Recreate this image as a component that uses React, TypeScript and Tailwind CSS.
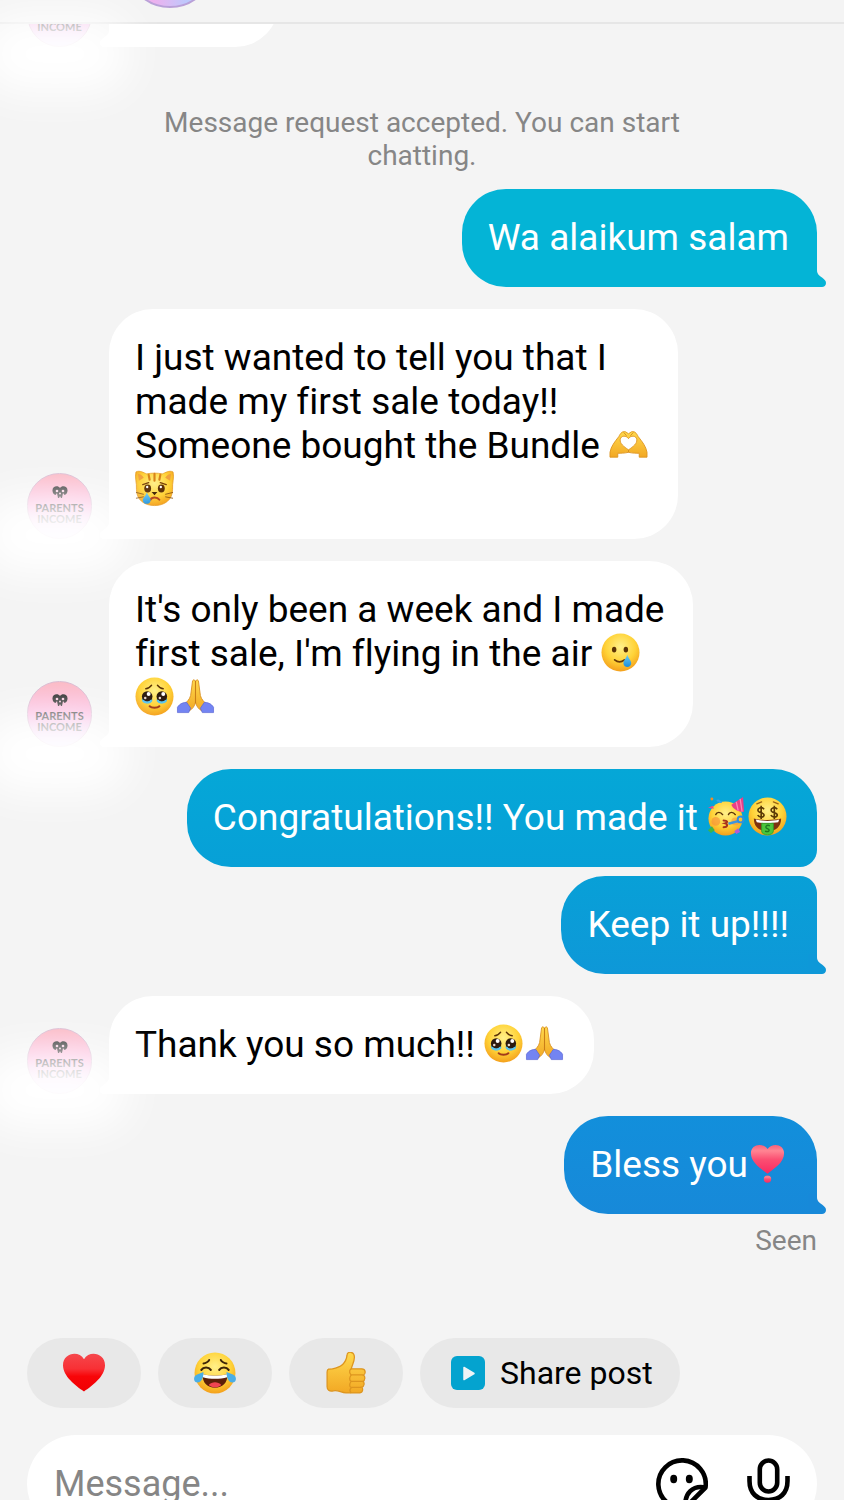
import { ReactNode, useState } from "react";
import clsx from "clsx";

const EMOJI = "inline-block w-[39px] h-[39px] mr-[2px] align-[-6px]";

// shared gradients, every emoji points at these
function EmojiDefs() {
    return (
        <svg className="absolute w-0 h-0" aria-hidden="true">
            <defs>
                <radialGradient id="face" cx="0.5" cy="0.35" r="0.65">
                    <stop offset="0" stopColor="#fff08a" />
                    <stop offset="0.6" stopColor="#ffd338" />
                    <stop offset="1" stopColor="#f4a01c" />
                </radialGradient>
                <linearGradient id="hand" x1="0" y1="0" x2="0" y2="1">
                    <stop offset="0" stopColor="#ffd94d" />
                    <stop offset="1" stopColor="#f2a824" />
                </linearGradient>
                <linearGradient id="heart" x1="0" y1="0" x2="0" y2="1">
                    <stop offset="0" stopColor="#f5474c" />
                    <stop offset="0.4" stopColor="#f83035" />
                    <stop offset="0.6" stopColor="#f80508" />
                    <stop offset="1" stopColor="#f00004" />
                </linearGradient>
                <linearGradient id="pinkHeart" x1="0" y1="0" x2="0" y2="1">
                    <stop offset="0" stopColor="#f9607a" />
                    <stop offset="0.2" stopColor="#ff8593" />
                    <stop offset="0.5" stopColor="#fb4f72" />
                    <stop offset="1" stopColor="#f92a62" />
                </linearGradient>
                <linearGradient id="tear" x1="0" y1="0" x2="0" y2="1">
                    <stop offset="0" stopColor="#6fcdf5" />
                    <stop offset="1" stopColor="#1b8fdc" />
                </linearGradient>
            </defs>
        </svg>
    );
}

function Emoji({ label, className, children }: { label: string; className?: string; children: ReactNode }) {
    return (
        <svg viewBox="0 0 40 40" role="img" aria-label={label} className={className ?? EMOJI}>
            {children}
        </svg>
    );
}

function HeartHands() {
    return (
        <Emoji label="heart hands">
            <path d="M1 33 L1 28 C2 22 6 17 10 12 C12 8 14 6 17 7 L20 9 L23 7 C26 6 28 8 30 12 C34 17 38 22 39 28 L39 33 L31 33 L31 29 C28 29 24 29 20 28 C16 29 12 29 9 29 L9 33 Z" fill="url(#hand)" stroke="#dd9420" strokeWidth="0.9" strokeLinejoin="round" />
            <path d="M20 25.500 C15 22 11 19 11.500 15 C12 10.500 18 10.500 20 14 C22 10.500 28 10.500 28.500 15 C29 19 25 22 20 25.500 Z" fill="#fff" stroke="#dd9420" strokeWidth="0.9" />
            <path d="M15 7.500 L18 11 M25 7.500 L22 11 M20 25.500 V28" stroke="#d48a1c" strokeWidth="0.9" fill="none" />
        </Emoji>
    );
}

function CryingCat() {
    return (
        <Emoji label="crying cat">
            <path d="M1 3 C5 1 9 4 12 5 C17 4 23 4 28 5 C31 4 35 1 39 3 C40.500 9 38 14 38.500 21 C38.500 32 30 37.500 20 37.500 C10 37.500 1.500 32 1.500 21 C2 14 -0.500 9 1 3 Z" fill="url(#face)" stroke="#e59a20" strokeWidth="0.8" />
            <path d="M3 5 C6 5 8 7 9 9 L4 12 Z M37 5 C34 5 32 7 31 9 L36 12 Z" fill="#f0a03c" />
            <path d="M14 6 L15 11 M20 5 V12 M26 6 L25 11" stroke="#d98419" strokeWidth="2.200" strokeLinecap="round" />
            <path d="M8 16 L14 14 M32 16 L26 14" stroke="#7a4208" strokeWidth="1.500" strokeLinecap="round" />
            <ellipse cx="13" cy="20" rx="3.500" ry="4" fill="#5c3006" />
            <ellipse cx="27" cy="20" rx="3.500" ry="4" fill="#5c3006" />
            <circle cx="12.500" cy="18.500" r="1.200" fill="#fff" />
            <circle cx="26.500" cy="18.500" r="1.200" fill="#fff" />
            <path d="M17 23.500 H23 L20 27 Z" fill="#3f2206" />
            <path d="M16 31.500 C17 28.500 23 28.500 25 31.500" fill="none" stroke="#b2431a" strokeWidth="2" strokeLinecap="round" />
            <path d="M1 24 L9 26 M1 30 L9 28.500 M39 24 L31 26 M39 30 L31 28.500" stroke="#8b5713" strokeWidth="0.9" />
            <path d="M12 24 C14 28 16 29 16 32 C16 37 8 37 8 32 C8 29 11 28 12 24 Z" fill="url(#tear)" />
        </Emoji>
    );
}

function SmilingTear() {
    return (
        <Emoji label="smiling face with tear">
            <circle cx="20" cy="20" r="19.500" fill="url(#face)" />
            <ellipse cx="13.500" cy="17" rx="2.300" ry="3" fill="#5b3206" />
            <ellipse cx="25.500" cy="17" rx="2.300" ry="3" fill="#5b3206" />
            <path d="M14 27.500 C17 30 21 30 24 27.500" fill="none" stroke="#6a3a08" strokeWidth="1.800" strokeLinecap="round" />
            <path d="M27 22 C28 26 31 28 31 31 C31 36 23 36 23 31 C23 28 26 26 27 22 Z" fill="url(#tear)" />
        </Emoji>
    );
}

function HoldingTears() {
    return (
        <Emoji label="face holding back tears">
            <circle cx="20" cy="20" r="19.500" fill="url(#face)" />
            <path d="M11 12 C13 12 15 11 17 8.500 M29 12 C27 12 25 11 23 8.500" fill="none" stroke="#5b3206" strokeWidth="1.400" strokeLinecap="round" />
            <path d="M7 22 C7 28 17 29 18 23 Z M33 22 C33 28 23 29 22 23 Z" fill="#3fb4e6" />
            <circle cx="12.500" cy="20" r="5.400" fill="#2c1a10" />
            <circle cx="27.500" cy="20" r="5.400" fill="#2c1a10" />
            <circle cx="14" cy="17.500" r="2" fill="#fff" />
            <circle cx="29" cy="17.500" r="2" fill="#fff" />
            <circle cx="10.500" cy="21.500" r="1.300" fill="#e9d9d2" />
            <circle cx="25.500" cy="21.500" r="1.300" fill="#e9d9d2" />
            <path d="M8 24 C10 27 15 27 17 24 M23 24 C25 27 30 27 32 24" fill="none" stroke="#5cc5ee" strokeWidth="2" />
            <path d="M15 30 C17 32 23 32 25 30" fill="none" stroke="#a23b1a" strokeWidth="2" strokeLinecap="round" />
        </Emoji>
    );
}

function FoldedHands() {
    return (
        <Emoji label="folded hands">
            <path d="M17 4 C18 2 19.500 3 20 5 C20.500 3 22 2 23 4 L25 19 C26 23 29 26 32 28 L27 35 C23 33 21 30 20 26 C19 30 17 33 13 35 L8 28 C11 26 14 23 15 19 Z" fill="url(#hand)" stroke="#d98f20" strokeWidth="0.9" strokeLinejoin="round" />
            <path d="M20 4 V27" stroke="#c97e18" strokeWidth="1.100" />
            <path d="M1.500 31 C4 27 8 26 11 26 L15 32 L13 36.500 H1.500 Z" fill="#7384f2" stroke="#5a66d6" strokeWidth="0.7" />
            <path d="M38.500 31 C36 27 32 26 29 26 L25 32 L27 36.500 H38.500 Z" fill="#7384f2" stroke="#5a66d6" strokeWidth="0.7" />
        </Emoji>
    );
}

function Partying() {
    return (
        <Emoji label="partying face">
            <circle cx="19" cy="22" r="17.500" fill="url(#face)" />
            <circle cx="9" cy="25" r="4.500" fill="#f58a3c" opacity="0.6" />
            <circle cx="29" cy="25" r="4" fill="#f58a3c" opacity="0.5" />
            <path d="M9 18 C10 15 14 15 16 18 M22 18 C23 15 27 15 29 18" fill="none" stroke="#5b3206" strokeWidth="1.500" strokeLinecap="round" />
            <path d="M17 24 C21 24 22 26 18.500 27 C22 28 21 31 17 31" fill="none" stroke="#a8331c" strokeWidth="2" strokeLinecap="round" />
            <path d="M22 27.500 L33 24.500" stroke="#3f95dc" strokeWidth="2.600" />
            <circle cx="34.500" cy="23" r="3" fill="none" stroke="#2f8fe0" strokeWidth="2" />
            <path d="M25 8 L37 0 L38 15 C33 16 27 13 25 8 Z" fill="#ea3f87" />
            <path d="M30 5 L32 14 M34 2 L36 15" stroke="#ff86b8" strokeWidth="1.300" />
            <path d="M1 11 L6 9 L7 12 Z" fill="#e64a8e" />
            <path d="M10 4 C13 2 12 6 15 5" fill="none" stroke="#35a0e8" strokeWidth="2" />
            <circle cx="5" cy="2" r="1.500" fill="#f08c2a" />
            <path d="M1 34 L5 30 L8 34 L4 37 Z" fill="#3bb54a" />
            <path d="M28 35 L32 32 L34 36 L30 38 Z" fill="#b65ad6" />
        </Emoji>
    );
}

function MoneyMouth() {
    return (
        <Emoji label="money-mouth face">
            <circle cx="20" cy="20" r="19.500" fill="url(#face)" />
            <path d="M9 7 L14 5 M31 7 L26 5" stroke="#9a6414" strokeWidth="1.300" strokeLinecap="round" />
            <path d="M6 22 C13 24 27 24 34 22 C34 31 28 35 20 35 C12 35 6 31 6 22 Z" fill="#7d3210" />
            <path d="M8 23 C15 25 25 25 32 23 L31 26 C25 27 15 27 9 26 Z" fill="#fff" />
            <path d="M14 27 H26 V35 C26 40 14 40 14 35 Z" fill="#4ac63d" stroke="#2f9e2a" strokeWidth="0.8" />
            <path d="M22.500 29.500 C19 28 16.500 31 20 32.500 C23.500 34 21 36.500 17.500 35" fill="none" stroke="#1f7a22" strokeWidth="1.400" />
            <path d="M16.500 12.500 C14 9.500 9 11.500 10.500 14.500 C12 17 16.500 15.500 16.500 18.500 C16 21.500 11 21 10 18.500 M13.500 9 V22.500" fill="none" stroke="#5b3a06" strokeWidth="1.700" />
            <path d="M30 12.500 C27.500 9.500 22.500 11.500 24 14.500 C25.500 17 30 15.500 30 18.500 C29.500 21.500 24.500 21 23.500 18.500 M27 9 V22.500" fill="none" stroke="#5b3a06" strokeWidth="1.700" />
        </Emoji>
    );
}

function HeartExclamation() {
    return (
        <Emoji label="heart exclamation">
            <path d="M20 30.500 C13 25 3 19 3 9.500 C3 0 15 -1.500 20 5 C25 -1.500 37 0 37 9.500 C37 19 27 25 20 30.500 Z" fill="url(#pinkHeart)" />
            <circle cx="20" cy="36" r="3.800" fill="url(#pinkHeart)" />
        </Emoji>
    );
}

function RedHeart() {
    return (
        <Emoji label="red heart" className="w-[42px] h-[42px]">
            <path d="M20 37.500 C12 32 0 23 0 12.500 C0 1 15 -2 20 7 C25 -2 40 1 40 12.500 C40 23 28 32 20 37.500 Z" fill="url(#heart)" />
        </Emoji>
    );
}

function Joy() {
    return (
        <Emoji label="tears of joy" className="w-[42px] h-[42px]">
            <circle cx="20" cy="20" r="19.500" fill="url(#face)" />
            <path d="M9 11 C11 11 14 9 14.500 7.500 M31 11 C29 11 26 9 25.500 7.500" fill="none" stroke="#3d2408" strokeWidth="1.800" strokeLinecap="round" />
            <path d="M7 17 C9 14 14 14 16 17 M24 17 C26 14 31 14 33 17" fill="none" stroke="#3d2408" strokeWidth="2" strokeLinecap="round" />
            <path d="M8 21 C15 23 25 23 32 21 C32 30 27 34 20 34 C13 34 8 30 8 21 Z" fill="#5c1f08" />
            <path d="M8 21 C15 23 25 23 32 21 L31.500 24 C25 26 15 26 8.500 24 Z" fill="#fff" />
            <path d="M14 31.500 C17 28 23 28 26 31.500 C23 34.500 17 34.500 14 31.500 Z" fill="#ef4452" />
            <path d="M9 19 C9 25 7 29 3.500 29 C-1 29 -1 23 3 21.500 Z" fill="#4aaee6" />
            <path d="M31 19 C31 25 33 29 36.500 29 C41 29 41 23 37 21.500 Z" fill="#4aaee6" />
        </Emoji>
    );
}

function ThumbsUp() {
    return (
        <Emoji label="thumbs up" className="w-[42px] h-[42px]">
            <path d="M2 19 C2 16 4 16 7 16 C14 15 20 11 21 3 C21 -1 28 -1 28 5 C28 9 26 12 25 16 H35 C39 16 39 21 36.500 22 C38.500 23 38.500 27 36 28 C38 29 37.500 33 35 33.500 C36.500 35 36 39 33 39 H20 C15 38.500 12 36 8 37 C4 38 2 36 2 33 Z" fill="url(#hand)" stroke="#dd951f" strokeWidth="1.200" />
            <path d="M24 21.800 H36 M25 28 H35.500 M25 33.700 H34.500 M25 16 C22 18 24 21 25 22 C23 24 23 27 25 28 C23 30 23 33 25 34 C23 36 24 38 25 39" fill="none" stroke="#dd951f" strokeWidth="1.200" />
        </Emoji>
    );
}

function Avatar({ glow }: { glow: string }) {
    return (
        <div className="relative mr-[17px] w-[65px] shrink-0">
            <div className="flex h-[66px] flex-col items-center rounded-full border border-[#d9b8d0] bg-linear-to-b from-[#fbb8c3] via-[#fbb8e0] to-[#e6d4fb] pt-[12px]">
                <svg viewBox="0 0 16 12" className="h-[12px] w-[16px] shrink-0" aria-hidden="true">
                    <path d="M8 2 C10 -1 16 0 15.500 5 C15.300 7.500 14 8.500 12.500 9 L11 7 L10 12 H9 L8 10 L7 12 H6 L5 7 L3.500 9 C2 8.500 0.700 7.500 0.500 5 C0 0 6 -1 8 2 Z" fill="#222" />
                    <circle cx="5" cy="5" r="1.300" fill="#f9c8de" />
                    <circle cx="11" cy="5" r="1.300" fill="#f9c8de" />
                    <circle cx="8" cy="7.500" r="1" fill="#f9c8de" />
                </svg>
                <span className="mt-[4px] font-[Lato] text-[11px] leading-[11px] font-bold text-[#333]">PARENTS</span>
                <span className="font-[Lato] text-[11px] leading-[11px] font-bold text-[#555]">INCOME</span>
            </div>
            <div className={clsx("absolute -left-[47px] z-20 h-[78px] w-[150px] rounded-[36px] bg-white blur-[22px]", glow)}></div>
        </div>
    );
}

function Received({ glow, className, children }: { glow: string; className?: string; children?: ReactNode }) {
    return (
        <div className={clsx("flex items-end", className)}>
            <Avatar glow={glow} />
            <div className="relative min-h-[98px] min-w-[170px] rounded-[44px] rounded-bl-none bg-white py-[27px] pr-[28px] pl-[26px] text-black">
                <Tail className="absolute bottom-0 -left-[9px] h-[20px] w-[18px] -scale-x-100 text-white" />
                {children}
            </div>
        </div>
    );
}

function Tail({ className }: { className: string }) {
    return (
        <svg viewBox="0 0 18 20" className={className} aria-hidden="true">
            <path d="M0 0 H9 V3 C9 7 11 8.500 14 10.500 C16 12 18 13.500 18 16 C18 18.500 16 20 14 20 H0 Z" fill="currentColor" />
        </svg>
    );
}

function Sent({ className, tail, children }: { className: string; tail?: string; children: ReactNode }) {
    return (
        <div className="flex justify-end">
            <div className={clsx("relative py-[27px] pr-[28px] pl-[26px] text-white", className)}>
                {children}
                {tail && <Tail className={clsx("absolute -right-[9px] bottom-0 h-[20px] w-[18px]", tail)} />}
            </div>
        </div>
    );
}

export default function App() {
    const [message, setMessage] = useState("");
    const chip = "flex h-[70px] w-[114px] items-center justify-center rounded-full bg-[#e8e8e8]";

    return (
        <div className="h-screen overflow-hidden bg-[#f4f4f4] font-[Roboto,sans-serif] text-[37px] leading-[44px] [font-variant-ligatures:none]">
            <EmojiDefs />
            <header className="relative z-10 flex h-[24px] items-start overflow-hidden border-b-2 border-[#e6e6e6] bg-[#f4f4f4] pl-[125px]">
                <div className="-mt-[82px] h-[90px] w-[90px] shrink-0 rounded-full border-2 border-[#b9a0d8] bg-linear-to-r from-[#eeb0ee] from-30% to-[#bcc8fc] to-70%"></div>
            </header>

            <main className="px-[27px]">
                <Received glow="top-[34px]" className="-mt-[75px]" />

                <p className="mx-auto mt-[59px] max-w-[564px] text-center text-[28px] leading-[33px] text-[#868686]">
                    Message request accepted. You can start chatting.
                </p>

                <div className="mt-[17px] flex flex-col gap-[22px]">
                    <Sent className="rounded-[44px] rounded-br-none bg-[#04b4d6]" tail="text-[#04b4d6]">
                        Wa alaikum salam
                    </Sent>
                    <Received glow="top-[23px]">
                        I just wanted to tell you that I<br />
                        made my first sale today!!<br />
                        Someone bought the Bundle <HeartHands /><br />
                        <CryingCat />
                    </Received>
                    <Received glow="top-[34px]">
                        It's only been a week and I made<br />
                        first sale, I'm flying in the air <SmilingTear /><br />
                        <HoldingTears /><FoldedHands />
                    </Received>
                    <div className="flex flex-col gap-[9px]">
                        <Sent className="rounded-[44px] rounded-br-[17px] bg-linear-to-b from-[#05a7d7] to-[#07a0d7]">
                            Congratulations!! You made it <Partying /><MoneyMouth />
                        </Sent>
                        <Sent className="rounded-[44px] rounded-tr-[17px] rounded-br-none bg-linear-to-b from-[#08a0d7] to-[#0e98d8]" tail="text-[#0e98d8]">
                            Keep it up!!!!
                        </Sent>
                    </div>
                    <Received glow="top-[23px]">
                        Thank you so much!! <HoldingTears /><FoldedHands />
                    </Received>
                    <Sent className="rounded-[44px] rounded-br-none bg-linear-to-b from-[#128fdb] to-[#1789d9]" tail="text-[#1789d9]">
                        Bless you<HeartExclamation />
                    </Sent>
                </div>
                <p className="mt-[10px] text-right text-[28px] leading-[33px] text-[#868686]">Seen</p>
            </main>

            <footer className="mt-[81px] px-[27px]">
                <div className="flex gap-[17px]">
                    <button className={chip}><RedHeart /></button>
                    <button className={chip}><Joy /></button>
                    <button className={chip}><ThumbsUp /></button>
                    <button className="flex h-[70px] items-center gap-[15px] rounded-full bg-[#e8e8e8] pr-[27px] pl-[31px] text-[32px] text-black">
                        <svg viewBox="0 0 34 34" className="h-[34px] w-[34px]" aria-hidden="true">
                            <rect width="34" height="34" rx="6" fill="#04a3cf" />
                            <path d="M13 11.500 L23 17.500 L13 23.500 Z" fill="#eef4f6" stroke="#eef4f6" strokeWidth="1.500" strokeLinejoin="round" />
                        </svg>
                        Share post
                    </button>
                </div>

                <div className="mt-[27px] flex h-[98px] items-center rounded-[49px] bg-white px-[27px]">
                    <input
                        type="text"
                        aria-label="Message"
                        placeholder="Message..."
                        value={message}
                        onChange={(e) => setMessage(e.target.value)}
                        className="min-w-0 flex-1 bg-transparent text-[36px] text-black outline-none placeholder:text-[#868686]"
                    />
                    <button aria-label="Stickers" className="mr-[39px]">
                        <svg viewBox="0 0 52 52" className="h-[52px] w-[52px]" fill="none" stroke="#000" strokeWidth="4.600" strokeLinejoin="round">
                            <path d="M49.500 29.500 A23.700 23.700 0 1 0 29.500 49.500 Z" />
                            <path d="M49.500 29.500 C37 27 28 35 29.500 49.500" />
                            <ellipse cx="17.700" cy="21" rx="3.500" ry="4.200" fill="#000" stroke="none" />
                            <ellipse cx="33.300" cy="21" rx="3.500" ry="4.200" fill="#000" stroke="none" />
                        </svg>
                    </button>
                    <button aria-label="Record voice">
                        <svg viewBox="0 0 43 52" className="h-[52px] w-[43px]" fill="none" stroke="#000" strokeWidth="4.600" strokeLinecap="butt">
                            <rect x="12.800" y="2.500" width="17.400" height="31" rx="8.700" />
                            <path d="M2.500 18 V23 C2.500 35 10 42 21.500 42 C33 42 40.500 35 40.500 23 V18" />
                            <path d="M21.500 42 V51" />
                        </svg>
                    </button>
                </div>
            </footer>
        </div>
    );
}
